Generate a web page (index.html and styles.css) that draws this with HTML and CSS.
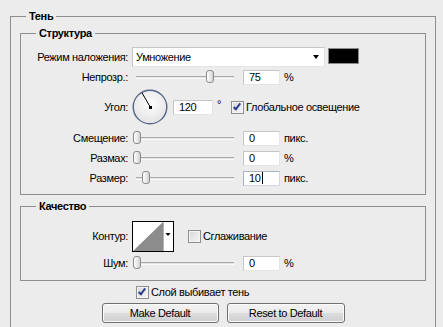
FILE: index.html
```html
<!DOCTYPE html>
<html lang="ru">
  <head>
    <meta charset="utf-8">
    <title>Тень</title>
    <link rel="stylesheet" href="styles.css">
  </head>
  <body>
    <form class="dialog" novalidate>

      <fieldset class="group group-outer">
        <legend>Тень</legend>

        <!-- структура -->
        <fieldset class="group group-structure">
          <legend>Структура</legend>

          <div class="row">
            <span class="row-label">Режим наложения:</span>
            <div class="select">Умножение<span class="select-arrow"></span></div>
            <span class="swatch"></span>
          </div>

          <div class="row">
            <span class="row-label">Непрозр.:</span>
            <div class="slider"><span class="slider-track"></span><span class="slider-thumb" style="left: 74px"></span></div>
            <span class="field">75</span>
            <span class="unit">%</span>
          </div>

          <div class="row row-dial">
            <span class="row-label">Угол:</span>
            <svg class="dial" width="36" height="36" viewBox="0 0 36 36">
              <defs>
                <radialGradient id="dial-fill" cx="50%" cy="40%" r="60%">
                  <stop offset="0" stop-color="#ffffff"/>
                  <stop offset="1" stop-color="#e2e2e2"/>
                </radialGradient>
              </defs>
              <circle cx="18" cy="18" r="16.8" fill="url(#dial-fill)" stroke="#56648a" stroke-width="1.4"/>
              <line x1="18.5" y1="18.5" x2="10" y2="3.8" stroke="#000" stroke-width="1"/>
              <rect x="17" y="17" width="3" height="3" fill="#000"/>
            </svg>
            <span class="field field-angle">120</span>
            <span class="degree">°</span>
            <span class="check check-on check-global"></span>
            <span class="check-text">Глобальное освещение</span>
          </div>

          <div class="row row-first-slider">
            <span class="row-label">Смещение:</span>
            <div class="slider"><span class="slider-track"></span><span class="slider-thumb" style="left: 1px"></span></div>
            <span class="field">0</span>
            <span class="unit">пикс.</span>
          </div>

          <div class="row">
            <span class="row-label">Размах:</span>
            <div class="slider"><span class="slider-track"></span><span class="slider-thumb" style="left: 1px"></span></div>
            <span class="field">0</span>
            <span class="unit">%</span>
          </div>

          <div class="row">
            <span class="row-label">Размер:</span>
            <div class="slider"><span class="slider-track"></span><span class="slider-thumb" style="left: 10px"></span></div>
            <span class="field field-focus">10<span class="caret"></span></span>
            <span class="unit">пикс.</span>
          </div>
        </fieldset>

        <!-- качество -->
        <fieldset class="group group-quality">
          <legend>Качество</legend>

          <div class="row row-contour">
            <span class="row-label">Контур:</span>
            <span class="contour">
              <svg width="40" height="29" viewBox="0 0 40 29">
                <rect x="0" y="0" width="40" height="29" fill="#fff"/>
                <polygon points="0,29 30,0 30,29" fill="#8c8c8c"/>
                <line x1="30.5" y1="0" x2="30.5" y2="29" stroke="#b4b4b4" stroke-width="1"/>
                <polygon points="32.5,11 37.5,11 35,14" fill="#000"/>
              </svg>
            </span>
            <span class="check check-smooth"></span>
            <span class="check-text">Сглаживание</span>
          </div>

          <div class="row">
            <span class="row-label">Шум:</span>
            <div class="slider"><span class="slider-track"></span><span class="slider-thumb" style="left: 1px"></span></div>
            <span class="field">0</span>
            <span class="unit">%</span>
          </div>
        </fieldset>

        <div class="knockout">
          <span class="check check-on"></span>
          <span class="check-text">Слой выбивает тень</span>
        </div>

        <div class="actions">
          <button type="button" class="button button-make">Make Default</button>
          <button type="button" class="button button-reset">Reset to Default</button>
        </div>

      </fieldset>

    </form>
  </body>
</html>
```

FILE: styles.css
```css
html {
  box-sizing: border-box;
}

*,
*:before,
*:after {
  box-sizing: inherit;
}

body {
  margin: 0;
  overflow: hidden;
  background: #ececec;
  color: #000;
  font-family: "Liberation Sans", Arial, sans-serif;
  font-size: 11px;
  line-height: 13px;
  letter-spacing: -0.35px;
}

/* group boxes */

.group {
  margin: 0;
  padding: 0 0 0 9px;
  border: 1px solid #8e8e8e;
  min-inline-size: 0;
}

.group legend {
  margin-left: 6px;
  padding: 0 3px;
  font-weight: bold;
  line-height: 14px;
}

.group-outer {
  margin: 9px 7px 0 10px;
  padding: 3px 9px 30px 9px;
}

.group-structure {
  padding-top: 7px;
  padding-bottom: 6px;
}

.group-quality {
  margin-top: 4px;
  padding-top: 7px;
  padding-bottom: 7px;
}

/* rows */

.row {
  display: flex;
  align-items: center;
  height: 20px;
}

.row-dial {
  height: 40px;
}

.row-first-slider {
  margin-top: 1px;
}

.row-contour {
  height: 33px;
}

.row-label {
  flex: none;
  width: 98px;
  margin-right: 4px;
  text-align: right;
  white-space: nowrap;
}

/* blend mode select */

.select {
  display: flex;
  align-items: center;
  justify-content: space-between;
  width: 193px;
  height: 20px;
  padding: 0 5px 0 3px;
  background: #fff;
  border: 1px solid;
  border-color: #c6c6c6 #e4e4e4 #e4e4e4 #c6c6c6;
}

.select-arrow {
  width: 0;
  height: 0;
  border-left: 3px solid transparent;
  border-right: 3px solid transparent;
  border-top: 4px solid #000;
}

.swatch {
  align-self: flex-start;
  width: 31px;
  height: 16px;
  margin: 1px 0 0 3px;
  background: #000;
  border: 1px solid #8a8a8a;
}

/* sliders */

.slider {
  position: relative;
  flex: none;
  width: 104px;
  height: 14px;
}

.slider-track {
  position: absolute;
  left: 4px;
  top: 6px;
  width: 98px;
  height: 3px;
  background: #e4e4e4;
  border-top: 1px solid #aaa;
  border-bottom: 1px solid #fbfbfb;
}

.slider-thumb {
  position: absolute;
  top: 0;
  width: 8px;
  height: 13px;
  background: linear-gradient(to right, #fdfdfd, #e6e6e6 60%, #cfcfcf);
  border: 1px solid #8c8c8c;
  border-radius: 3px;
}

/* text fields */

.field {
  display: flex;
  align-items: center;
  flex: none;
  width: 37px;
  height: 15px;
  margin-left: 7px;
  padding-left: 5px;
  background: #fff;
  border: 1px solid;
  border-color: #c6c6c6 #e4e4e4 #e4e4e4 #c6c6c6;
}

.field-angle {
  width: 40px;
  margin-left: 5px;
}

.field-focus {
  border-color: #a9b3c2 #d3d9e2 #d3d9e2 #a9b3c2;
}

.caret {
  width: 1px;
  height: 12px;
  margin-left: 1px;
  background: #000;
}

.unit {
  margin-left: 4px;
}

.degree {
  align-self: flex-start;
  margin: 11px 0 0 4px;
}

.dial {
  display: block;
  flex: none;
}

/* checkboxes */

.check {
  position: relative;
  flex: none;
  width: 13px;
  height: 13px;
  background: linear-gradient(135deg, #d8d8d8, #f6f6f6);
  border: 1px solid #8e8f8f;
  box-shadow: inset 0 0 0 1px #f4f4f4;
}

.check-on:after {
  content: "";
  position: absolute;
  left: 3px;
  top: 0;
  width: 4px;
  height: 8px;
  border-right: 2px solid #2c3f93;
  border-bottom: 2px solid #2c3f93;
  transform: rotate(38deg);
}

.check-global {
  margin-left: 10px;
}

.check-smooth {
  margin-left: 14px;
}

.check-text {
  margin-left: 2px;
  white-space: nowrap;
}

/* contour picker */

.contour {
  display: block;
  flex: none;
  width: 42px;
  height: 31px;
  border: 1px solid #000;
}

.contour svg {
  display: block;
}

/* footer */

.knockout {
  display: flex;
  align-items: center;
  height: 15px;
  margin-top: 4px;
  padding-left: 116px;
}

.actions {
  display: flex;
  justify-content: center;
  gap: 8px;
  margin-top: 3px;
}

.button {
  width: 117px;
  height: 20px;
  padding: 0;
  font-family: inherit;
  font-size: 11px;
  letter-spacing: inherit;
  color: #000;
  background: linear-gradient(#f3f3f3, #ebebeb 50%, #dddddd 50%, #cfcfcf);
  border: 1px solid #707070;
  border-radius: 3px;
  box-shadow: inset 0 0 0 1px #fbfbfb;
}

.button-reset {
  width: 118px;
}
```
